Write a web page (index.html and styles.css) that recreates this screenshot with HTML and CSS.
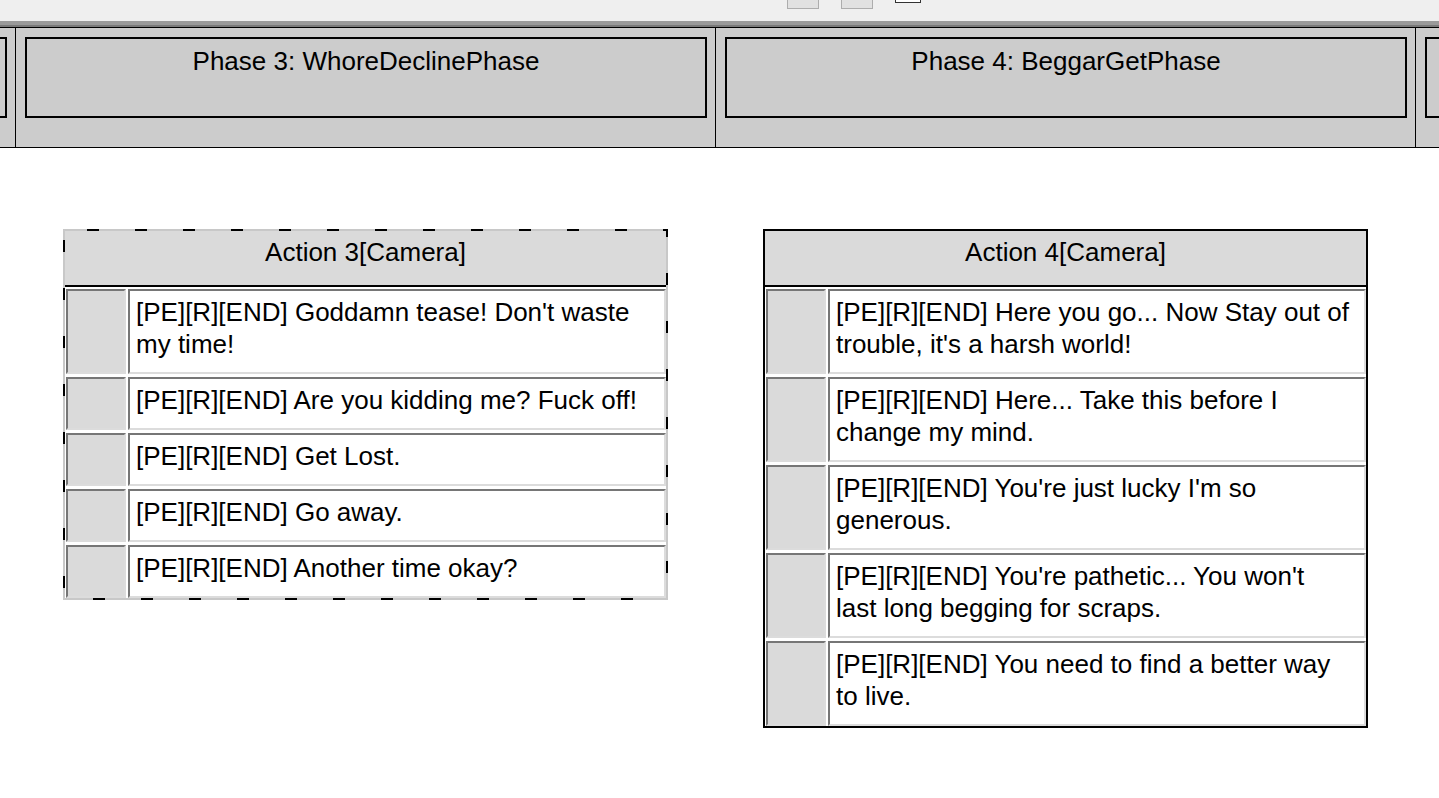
FILE: index.html
```html
<!DOCTYPE html>
<html lang="en">
<head>
  <meta charset="UTF-8" />
  <title>Phase Editor</title>
  <link rel="stylesheet" href="styles.css">
</head>
<body>
  <!-- tool strip (scrolled, only the button bottoms show) -->
  <div class="toolbar">
    <span class="tool-btn"></span>
    <span class="tool-btn"></span>
    <span class="tool-btn tool-btn-dark"></span>
  </div>
  <div class="splitter"></div>

  <!-- phase lanes -->
  <div class="phase-bar">
    <div class="phase phase-prev"><div class="phase-title"></div></div>
    <div class="phase"><div class="phase-title">Phase 3: WhoreDeclinePhase</div></div>
    <div class="phase"><div class="phase-title">Phase 4: BeggarGetPhase</div></div>
    <div class="phase"><div class="phase-title"></div></div>
  </div>

  <!-- actions under each phase -->
  <div class="canvas">
    <div class="lane">
      <div class="action selected">
        <div class="action-head">Action 3[Camera]</div>
        <div class="lines">
          <div class="line-row"><div class="mark"></div><div class="text">[PE][R][END] Goddamn tease! Don't waste<br>my time!</div></div>
          <div class="line-row"><div class="mark"></div><div class="text">[PE][R][END] Are you kidding me? Fuck off!</div></div>
          <div class="line-row"><div class="mark"></div><div class="text">[PE][R][END] Get Lost.</div></div>
          <div class="line-row"><div class="mark"></div><div class="text">[PE][R][END] Go away.</div></div>
          <div class="line-row"><div class="mark"></div><div class="text">[PE][R][END] Another time okay?</div></div>
        </div>
      </div>
    </div>
    <div class="lane">
      <div class="action">
        <div class="action-head">Action 4[Camera]</div>
        <div class="lines">
          <div class="line-row"><div class="mark"></div><div class="text">[PE][R][END] Here you go... Now Stay out of<br>trouble, it's a harsh world!</div></div>
          <div class="line-row"><div class="mark"></div><div class="text">[PE][R][END] Here... Take this before I<br>change my mind.</div></div>
          <div class="line-row"><div class="mark"></div><div class="text">[PE][R][END] You're just lucky I'm so<br>generous.</div></div>
          <div class="line-row"><div class="mark"></div><div class="text">[PE][R][END] You're pathetic... You won't<br>last long begging for scraps.</div></div>
          <div class="line-row"><div class="mark"></div><div class="text">[PE][R][END] You need to find a better way<br>to live.</div></div>
        </div>
      </div>
    </div>
  </div>
</body>
</html>
```

FILE: styles.css
```css
/* base */
* {
  box-sizing: border-box;
  margin: 0;
  padding: 0;
}
body {
  font-family: "Liberation Sans", Arial, sans-serif;
  font-size: 26px;
  line-height: 32px;
  color: #000;
  background: #fff;
  overflow: hidden;
}

/* tool strip */
.toolbar {
  height: 21px;
  background: #efefef;
  display: flex;
  align-items: flex-start;
  gap: 22px;
  padding-left: 787px;
  overflow: hidden;
}
.tool-btn {
  width: 32px;
  height: 24px;
  margin-top: -15px;
  background: #e1e1e1;
  border: 1px solid #adadad;
}
.tool-btn-dark {
  width: 26px;
  height: 20px;
  margin-top: -17px;
  background: #fff;
  border-color: #333;
}
.splitter {
  height: 6px;
  border-top: 4px solid #9a9a9a;
  background: #7a7a7a;
}

/* phase lanes */
.phase-bar {
  display: flex;
  background: #ccc;
  border-top: 1px solid #000;
  border-bottom: 1px solid #000;
  overflow: hidden;
}
.phase {
  flex: 0 0 700px;
  height: 119px;
  padding: 9px 0 0 9px;
  border-left: 1px solid #000;
}
.phase-prev {
  margin-left: -685px;
}
.phase-title {
  width: 682px;
  height: 81px;
  padding-top: 6px;
  border: 2px solid #000;
  text-align: center;
}

/* action blocks */
.canvas {
  display: flex;
  padding-left: 15px;
}
.lane {
  flex: 0 0 700px;
  padding: 81px 0 0 48px;
}
.action {
  position: relative;
  width: 605px;
  border: 2px solid #000;
  background: #fff;
}
.action.selected {
  border-color: #c8c8c8;
}
/* dashed selection frame */
.action.selected::after {
  content: "";
  position: absolute;
  inset: -2px;
  pointer-events: none;
  background:
    linear-gradient(90deg, #000 12px, transparent 0) 24px 0 / 48px 2px repeat-x,
    linear-gradient(90deg, #000 12px, transparent 0) 30px 100% / 48px 2px repeat-x,
    linear-gradient(#000 12px, transparent 0) 0 11px / 2px 48px repeat-y,
    linear-gradient(#000 12px, transparent 0) 100% 44px / 2px 48px repeat-y;
}
.action-head {
  height: 56px;
  padding-top: 5px;
  background: #dadada;
  border-bottom: 2px solid #000;
  text-align: center;
}
.lines {
  display: flex;
  flex-direction: column;
  gap: 3px;
  padding: 2px 0 0 1px;
}
.line-row {
  display: flex;
  gap: 2px;
}
.mark,
.text {
  border: 2px solid;
  border-color: #767676 #dcdcdc #dcdcdc #767676;
}
.mark {
  flex: 0 0 60px;
  background: #dadada;
}
.text {
  flex: 1;
  min-height: 53px;
  padding: 5px 2px 12px 6px;
  background: #fff;
  white-space: nowrap;
  overflow: hidden;
}
```
